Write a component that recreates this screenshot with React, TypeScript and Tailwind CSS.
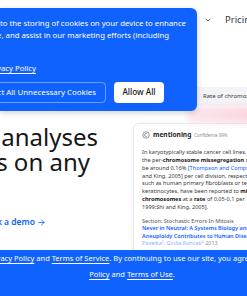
import React from 'react';
import { ChevronDown, ArrowRight } from 'lucide-react';

const Line: React.FC<{ children: React.ReactNode; className?: string }> = ({ children, className = '' }) => (
  <div className={`whitespace-nowrap ${className}`}>{children}</div>
);

const CitationCard: React.FC = () => (
  <div className="w-[230px] h-[200px] bg-white border border-[#e8e8ec] rounded-[6px] shadow-[0_1px_6px_rgba(0,0,0,0.06)] pl-[8px] pt-[7px]">
    <div className="flex items-center h-[8px]">
      <svg width="8" height="8" viewBox="0 0 16 16" fill="none" stroke="#6f6f6f" strokeWidth="1.4">
        <circle cx="8" cy="8" r="6.5" />
        <path d="M10.5 6.2a3 3 0 1 0 0 3.6" />
      </svg>
      <span className="ml-[3px] text-[6.6px] font-bold text-[#262626]">mentioning</span>
      <span className="ml-[3px] text-[4.4px] text-[#8d8d8d]">Confidence 99%</span>
    </div>
    <div className="mt-[10px] text-[5.6px] leading-[7.85px] text-[#393939]">
      <Line>In karyotypically stable cancer cell lines, the</Line>
      <Line>
        the per-<b className="text-[#161616]">chromosome missegregation</b> rate has been estimated to
      </Line>
      <Line>
        be around 0.16% <span className="text-[#0f62fe]">[Thompson and Compton, 2008; Shi</span>
      </Line>
      <Line>and King, 2005] per cell division, respectively, while</Line>
      <Line>such as human primary fibroblasts or telomerase-immortalized</Line>
      <Line>
        keratinocytes, have been reported to <b className="text-[#161616]">missegregate</b> their
      </Line>
      <Line>
        <b className="text-[#161616]">chromosomes</b> at a <b className="text-[#161616]">rate</b> of 0.05-0.1 per 100 divisions
      </Line>
      <Line>1999;Shi and King, 2005].</Line>
    </div>
    <div className="mt-[6px] text-[5.5px] leading-[7.4px]">
      <Line className="text-[#525252]">Section: Stochastic Errors In Mitosis</Line>
      <Line className="text-[#0f62fe] font-semibold">Never in Neutral: A Systems Biology and Evolutionary</Line>
      <Line className="text-[#0f62fe] font-semibold">Aneuploidy Contributes to Human Diseases</Line>
      <Line>
        <span className="text-[#8fb3ff]">Pavelka², Giulia Rancati²</span> <span className="text-[#8d8d8d]">2013</span>
      </Line>
    </div>
  </div>
);

const App: React.FC = () => {
  return (
    <div className="relative w-[247px] h-[296px] overflow-hidden bg-white font-['Noto_Sans',sans-serif]">
      {/* page underneath */}
      <div className="flex items-center h-[40px] pl-[204px] gap-[13px] text-[#393939]">
        <ChevronDown size={8} strokeWidth={2} className="shrink-0" />
        <span className="text-[9.5px] whitespace-nowrap">Pricing</span>
      </div>

      <div className="flex">
        <div className="w-[133px] shrink-0 pt-[84px]">
          <div className="flex justify-end w-[98px] text-[24px] leading-[25px] text-[#161616]">
            <span className="shrink-0 whitespace-nowrap">Accelerate analyses</span>
          </div>
          <div className="flex justify-end w-[90px] text-[24px] leading-[25px] text-[#161616]">
            <span className="shrink-0 whitespace-nowrap">Run experiments on any</span>
          </div>
          <div className="mt-[42px] flex justify-end w-[46px] h-[12px] items-center">
            <span className="shrink-0 flex items-center whitespace-nowrap text-[8.5px] font-semibold text-[#0f62fe]">
              Book a demo
              <ArrowRight size={9} strokeWidth={2.2} className="ml-[2px]" />
            </span>
          </div>
        </div>

        <div className="flex-1">
          <div className="mt-[47px] ml-[54px] h-[19px] bg-[#f2f4f8] flex items-center pl-[16px]">
            <span className="text-[6px] text-[#393939] whitespace-nowrap">Rate of chromosome missegregation</span>
          </div>
          <div className="h-[17px] ml-[55px] bg-gradient-to-r from-[#fbe3e8] via-[#f7c3cd] to-[#fad8df] blur-[3px] opacity-80" />
          <CitationCard />
        </div>
      </div>

      {/* cookie banner */}
      <div className="absolute left-0 top-[8px] w-[197px] h-[103px] bg-[#0f62fe] rounded-r-[6px] overflow-hidden shadow-[0_2px_6px_rgba(0,0,0,0.18)] text-white">
        <div className="pt-[9px] text-[7.75px] leading-[12px]">
          <div className="flex justify-end w-[186px]">
            <span className="shrink-0 whitespace-nowrap">By clicking “Allow All”, you agree to the storing of cookies on your device to enhance</span>
          </div>
          <div className="flex justify-end w-[169px]">
            <span className="shrink-0 whitespace-nowrap">site navigation, analyze site usage, and assist in our marketing efforts (including</span>
          </div>
          <div className="mt-[21px] flex justify-end w-[36px]">
            <span className="shrink-0 whitespace-nowrap underline underline-offset-[1.5px]">Privacy Policy</span>
          </div>
        </div>
        <div className="mt-[8px] flex items-center gap-[8px]">
          <div className="flex justify-end w-[106px]">
            <button className="shrink-0 h-[21px] px-[9px] rounded-[4px] border border-white/40 text-[7.9px] whitespace-nowrap">
              Reject All Unnecessary Cookies
            </button>
          </div>
          <button className="h-[21px] w-[50px] rounded-[4px] bg-white text-[#161616] text-[8.2px] font-medium whitespace-nowrap">
            Allow All
          </button>
        </div>
      </div>

      {/* bottom notice */}
      <div className="absolute left-0 bottom-0 w-full h-[46px] bg-[#0f62fe] text-white text-[7.5px] leading-[16px]">
        <div className="-ml-[13px] whitespace-nowrap">
          <span className="underline underline-offset-[1.5px]">Privacy Policy</span> and{' '}
          <span className="underline underline-offset-[1.5px]">Terms of Service</span>. By continuing to use our site, you agree to our Privacy
        </div>
        <div className="w-[264px] text-center whitespace-nowrap">
          <span className="underline underline-offset-[1.5px]">Policy</span> and{' '}
          <span className="underline underline-offset-[1.5px]">Terms of Use</span>.
        </div>
      </div>
    </div>
  );
};

export default App;
